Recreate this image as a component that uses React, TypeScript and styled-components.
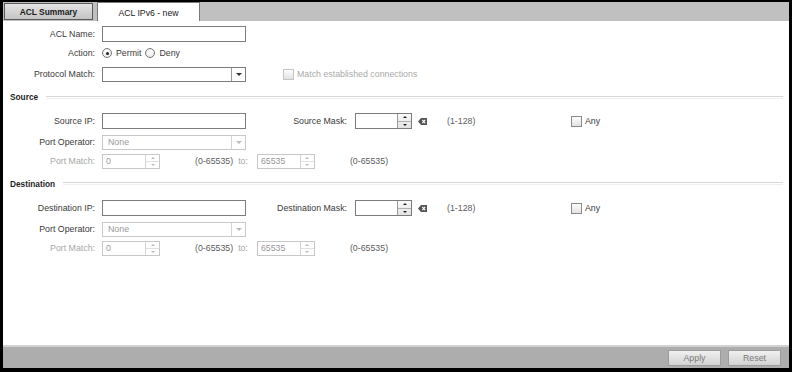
import React from 'react';
import styled, { createGlobalStyle } from 'styled-components';

const GlobalStyle = createGlobalStyle`
  html, body {
    margin: 0;
    padding: 0;
    background: #000;
  }
  body {
    font-family: "Liberation Sans", Arial, sans-serif;
    font-size: 8.8px;
    color: #3a3a3a;
  }
`;

const Window = styled.div`
  width: 786px;
  height: 366px;
  margin: 2px 0 0 3px;
  background: #fff;
  display: flex;
  flex-direction: column;
`;

const TabBar = styled.div`
  height: 19px;
  flex: none;
  background: #c0c0c0;
  display: flex;
  align-items: flex-end;
  padding-left: 1px;
  gap: 4px;
`;

const Tab = styled.div<{ $active?: boolean }>`
  box-sizing: border-box;
  height: ${(p) => (p.$active ? 19 : 17)}px;
  margin-bottom: ${(p) => (p.$active ? 0 : 1)}px;
  width: ${(p) => (p.$active ? 103 : 89)}px;
  border: 1px solid ${(p) => (p.$active ? '#7a7a7a' : '#5a5a5a')};
  border-bottom: ${(p) => (p.$active ? 'none' : '1px solid #5a5a5a')};
  background: ${(p) =>
    p.$active ? '#fff' : 'linear-gradient(#e4e4e4, #c4c4c4)'};
  font-weight: ${(p) => (p.$active ? 'normal' : 'bold')};
  font-size: ${(p) => (p.$active ? 8.7 : 8.4)}px;
  color: #1a1a1a;
  display: flex;
  align-items: center;
  justify-content: center;
  padding-top: ${(p) => (p.$active ? 1 : 0)}px;
`;

const Content = styled.div`
  flex: 1;
  padding-top: 4px;
  display: flex;
  flex-direction: column;
`;

const Row = styled.div<{ $h: number }>`
  height: ${(p) => p.$h}px;
  display: flex;
  align-items: center;
`;

const Label = styled.div<{ $w?: number; $disabled?: boolean }>`
  width: ${(p) => p.$w ?? 92}px;
  flex: none;
  text-align: right;
  margin-right: ${(p) => (p.$w ? 8 : 7)}px;
  color: ${(p) => (p.$disabled ? '#a8a8a8' : '#3a3a3a')};
  white-space: nowrap;
`;

const TextInput = styled.div<{ $w?: number }>`
  box-sizing: border-box;
  width: ${(p) => p.$w ?? 144}px;
  height: 16px;
  border: 1px solid #7c7c7c;
  background: #fff;
  flex: none;
`;

const SelectBox = styled.div<{ $disabled?: boolean }>`
  box-sizing: border-box;
  width: 144px;
  height: 15px;
  border: 1px solid ${(p) => (p.$disabled ? '#c8c8c8' : '#7c7c7c')};
  display: flex;
  flex: none;
  color: #999;
`;

const SelectValue = styled.div`
  flex: 1;
  padding-left: 5px;
  display: flex;
  align-items: center;
`;

const SelectArrow = styled.div<{ $disabled?: boolean }>`
  width: 13px;
  border-left: 1px solid ${(p) => (p.$disabled ? '#d4d4d4' : '#9a9a9a')};
  display: flex;
  align-items: center;
  justify-content: center;
  &::after {
    content: '';
    border-left: 3px solid transparent;
    border-right: 3px solid transparent;
    border-top: 3px solid ${(p) => (p.$disabled ? '#bbb' : '#333')};
  }
`;

const SpinBox = styled.div<{ $disabled?: boolean; $w?: number }>`
  box-sizing: border-box;
  width: ${(p) => p.$w ?? 58}px;
  height: ${(p) => (p.$disabled ? 15 : 16)}px;
  border: 1px solid ${(p) => (p.$disabled ? '#c8c8c8' : '#7c7c7c')};
  display: flex;
  flex: none;
  color: #999;
`;

const SpinValue = styled.div`
  flex: 1;
  padding-left: 3px;
  display: flex;
  align-items: center;
`;

const SpinButtons = styled.div<{ $disabled?: boolean }>`
  width: 13px;
  border-left: 1px solid ${(p) => (p.$disabled ? '#d4d4d4' : '#9a9a9a')};
  display: flex;
  flex-direction: column;
  background: ${(p) => (p.$disabled ? '#fff' : 'linear-gradient(#fafafa, #e2e2e2)')};
`;

const SpinHalf = styled.div<{ $down?: boolean; $disabled?: boolean }>`
  flex: 1;
  display: flex;
  align-items: center;
  justify-content: center;
  border-top: ${(p) => (p.$down ? `1px solid ${p.$disabled ? '#e0e0e0' : '#b0b0b0'}` : 'none')};
  &::after {
    content: '';
    border-left: 2px solid transparent;
    border-right: 2px solid transparent;
    ${(p) => (p.$down ? 'border-top' : 'border-bottom')}: 2px solid
      ${(p) => (p.$disabled ? '#bbb' : '#222')};
  }
`;

const Text = styled.span<{ $ml?: number; $mr?: number; $disabled?: boolean }>`
  margin-left: ${(p) => p.$ml ?? 0}px;
  margin-right: ${(p) => p.$mr ?? 0}px;
  color: ${(p) => (p.$disabled ? '#a8a8a8' : '#3a3a3a')};
  white-space: nowrap;
  flex: none;
`;

const RangeText = styled.span<{ $ml: number; $w?: number }>`
  margin-left: ${(p) => p.$ml}px;
  width: ${(p) => (p.$w ? `${p.$w}px` : 'auto')};
  color: #5c5c5c;
  white-space: nowrap;
  flex: none;
`;

const Radio = styled.span<{ $checked?: boolean; $ml?: number }>`
  box-sizing: border-box;
  width: 10px;
  height: 10px;
  border-radius: 50%;
  border: 1px solid #777;
  background: radial-gradient(circle at 50% 40%, #fff, #e4e4e4);
  display: flex;
  align-items: center;
  justify-content: center;
  flex: none;
  margin-left: ${(p) => p.$ml ?? 0}px;
  margin-right: 4px;
  &::after {
    content: '';
    width: 3px;
    height: 3px;
    border-radius: 50%;
    background: ${(p) => (p.$checked ? '#222' : 'transparent')};
  }
`;

const RadioGroup = styled.div`
  display: flex;
  align-items: center;
`;

const Check = styled.span<{ $disabled?: boolean }>`
  box-sizing: border-box;
  width: 11px;
  height: 11px;
  border: 1px solid ${(p) => (p.$disabled ? '#c4c4c4' : '#8a8a8a')};
  background: linear-gradient(#fdfdfd, #e2e2e2);
  flex: none;
  margin-right: 3px;
`;

const CheckField = styled.div<{ $ml: number; $disabled?: boolean }>`
  display: flex;
  align-items: center;
  margin-left: ${(p) => p.$ml}px;
  color: ${(p) => (p.$disabled ? '#aaa' : '#3a3a3a')};
`;

const Section = styled.div<{ $h: number }>`
  height: ${(p) => p.$h}px;
  display: flex;
  align-items: center;
  padding: 0 6px 0 7px;
`;

const SectionTitle = styled.span`
  font-weight: bold;
  font-size: 8.3px;
  color: #1e1e1e;
  margin-right: 8px;
`;

const SectionLine = styled.div`
  flex: 1;
  height: 1px;
  border-top: 1px solid #d6d6d6;
  border-bottom: 1px solid #efefef;
`;

const ClearIcon = styled.svg`
  margin-left: 6px;
  flex: none;
`;

const Footer = styled.div`
  height: 21px;
  flex: none;
  background: #adadad;
  border-top: 2px solid #d2d2d2;
  display: flex;
  align-items: center;
  justify-content: flex-end;
  gap: 7px;
  padding-right: 8px;
`;

const Button = styled.div`
  box-sizing: border-box;
  width: 53px;
  height: 16px;
  border: 1px solid #9c9c9c;
  background: linear-gradient(#f0f0f0, #d2d2d2);
  color: #7a7a7a;
  display: flex;
  align-items: center;
  justify-content: center;
`;

const Clear = () => (
  <ClearIcon width="9" height="7" viewBox="0 0 9 7">
    <path d="M0 3.5 L3 0 H9 V7 H3 Z" fill="#555" />
    <path d="M4.3 1.8 L7.2 5.2 M7.2 1.8 L4.3 5.2" stroke="#fff" strokeWidth="1.1" />
  </ClearIcon>
);

const Select = ({ value, disabled }: { value?: string; disabled?: boolean }) => (
  <SelectBox $disabled={disabled}>
    <SelectValue>{value}</SelectValue>
    <SelectArrow $disabled={disabled} />
  </SelectBox>
);

const Spin = ({ value, disabled, w }: { value?: string; disabled?: boolean; w?: number }) => (
  <SpinBox $disabled={disabled} $w={w}>
    <SpinValue>{value}</SpinValue>
    <SpinButtons $disabled={disabled}>
      <SpinHalf $disabled={disabled} />
      <SpinHalf $down $disabled={disabled} />
    </SpinButtons>
  </SpinBox>
);

const AddressBlock = ({ title, ipLabel, maskLabel, h }: { title: string; ipLabel: string; maskLabel: string; h: number }) => (
  <>
    <Section $h={h}>
      <SectionTitle>{title}</SectionTitle>
      <SectionLine />
    </Section>
    <Row $h={22}>
      <Label>{ipLabel}</Label>
      <TextInput />
      <Label $w={101}>{maskLabel}</Label>
      <Spin w={57} />
      <Clear />
      <RangeText $ml={20} $w={124}>(1-128)</RangeText>
      <CheckField $ml={0}>
        <Check />
        Any
      </CheckField>
    </Row>
    <Row $h={20}>
      <Label>Port Operator:</Label>
      <Select value="None" disabled />
    </Row>
    <Row $h={18}>
      <Label $disabled>Port Match:</Label>
      <Spin value="0" disabled />
      <RangeText $ml={35}>(0-65535)</RangeText>
      <Text $ml={5} $mr={9} $disabled>to:</Text>
      <Spin value="65535" disabled w={58} />
      <RangeText $ml={35}>(0-65535)</RangeText>
    </Row>
  </>
);

export default function App() {
  return (
    <>
      <GlobalStyle />
      <Window>
        <TabBar>
          <Tab>ACL Summary</Tab>
          <Tab $active>ACL IPv6 - new</Tab>
        </TabBar>
        <Content>
          <Row $h={17}>
            <Label>ACL Name:</Label>
            <TextInput />
          </Row>
          <Row $h={22}>
            <Label>Action:</Label>
            <RadioGroup>
              <Radio $checked />
              <Text>Permit</Text>
              <Radio $ml={4} />
              <Text>Deny</Text>
            </RadioGroup>
          </Row>
          <Row $h={20}>
            <Label>Protocol Match:</Label>
            <Select />
            <CheckField $ml={37} $disabled>
              <Check $disabled />
              Match established connections
            </CheckField>
          </Row>
          <AddressBlock title="Source" ipLabel="Source IP:" maskLabel="Source Mask:" h={26} />
          <AddressBlock title="Destination" ipLabel="Destination IP:" maskLabel="Destination Mask:" h={27} />
        </Content>
        <Footer>
          <Button>Apply</Button>
          <Button>Reset</Button>
        </Footer>
      </Window>
    </>
  );
}
